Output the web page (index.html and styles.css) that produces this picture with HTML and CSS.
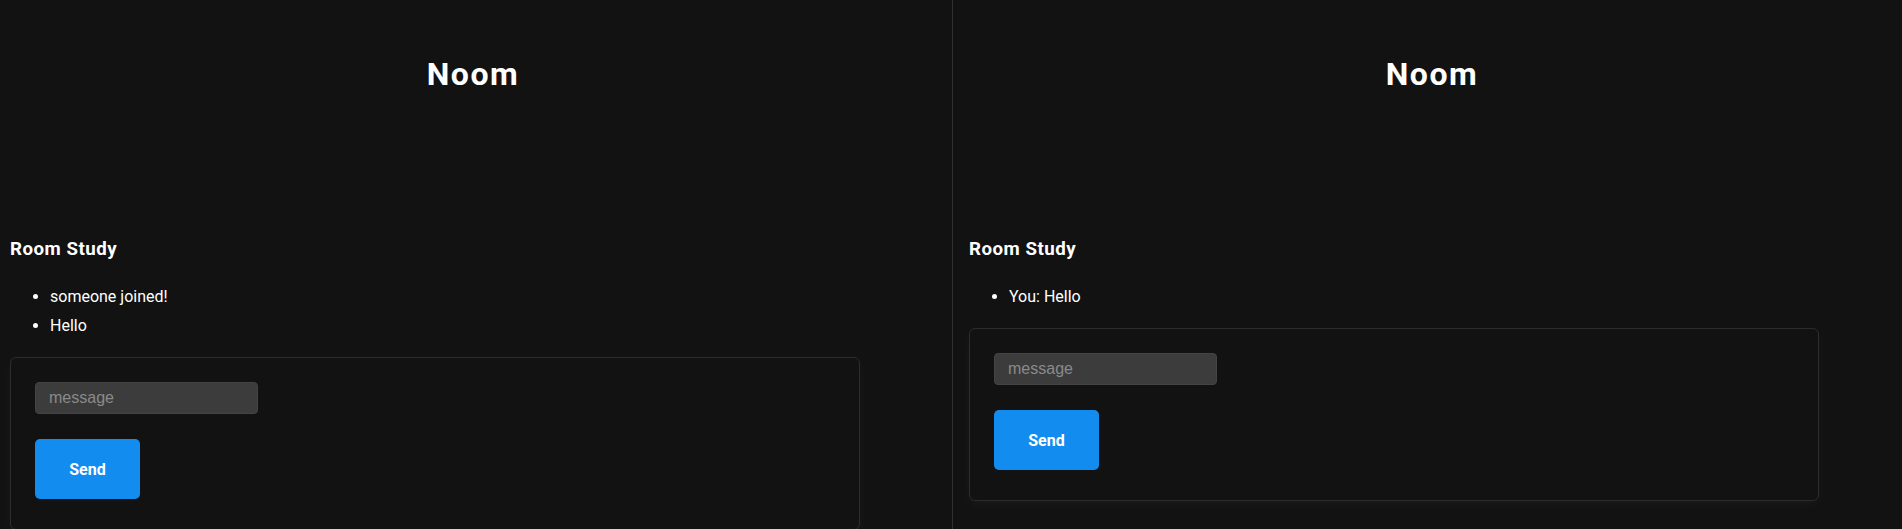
FILE: index.html
```html
<!DOCTYPE html>
<html lang="en">
<head>
<meta charset="utf-8">
<title>Noom</title>
<link rel="stylesheet" href="styles.css">
</head>
<body>
<div class="desktop">
  <section class="window">
    <div class="app">
      <header class="app-header"><h1>Noom</h1></header>
      <main class="room">
        <h3 class="room-title">Room Study</h3>
        <ul class="messages">
          <li>someone joined!</li>
          <li>Hello</li>
        </ul>
        <form class="composer">
          <input class="composer-input" type="text" placeholder="message">
          <button class="composer-send" type="button">Send</button>
        </form>
      </main>
    </div>
  </section>
  <div class="divider"></div>
  <section class="window window-right">
    <div class="app">
      <header class="app-header"><h1>Noom</h1></header>
      <main class="room">
        <h3 class="room-title">Room Study</h3>
        <ul class="messages">
          <li>You: Hello</li>
        </ul>
        <form class="composer">
          <input class="composer-input" type="text" placeholder="message">
          <button class="composer-send" type="button">Send</button>
        </form>
      </main>
    </div>
  </section>
</div>
</body>
</html>
```
FILE: styles.css
```css
html, body {
  margin: 0;
  padding: 0;
  background: #121212;
  overflow: hidden;
}

body {
  font-family: Roboto, "Noto Sans", sans-serif;
  color: #ffffff;
}

.desktop {
  display: flex;
  height: 529px;
  overflow: hidden;
}

.window {
  flex: none;
  width: 952px;
  overflow: hidden;
}

.window-right {
  flex: 1 1 auto;
  width: auto;
  min-width: 0;
  padding-left: 6px;
}

.divider {
  flex: none;
  width: 1px;
  background: #2f2f2f;
}

.app {
  box-sizing: border-box;
  width: 946px;
  padding: 54px 10px 0;
}

.app-header h1 {
  margin: 0;
  font-size: 32px;
  line-height: 40px;
  font-weight: 700;
  letter-spacing: 1.5px;
  text-align: center;
}

.room {
  margin-top: 143px;
}

.room-title {
  margin: 0;
  font-size: 18.72px;
  line-height: 24px;
  font-weight: 700;
  letter-spacing: 0.5px;
}

.messages {
  margin: 21px 0 17px;
  padding-left: 40px;
  font-size: 16px;
  line-height: 29px;
}

.composer {
  box-sizing: border-box;
  width: 850px;
  display: flex;
  flex-direction: column;
  align-items: flex-start;
  gap: 25px;
  padding: 24px 24px 30px;
  border: 1px solid #2c2c2c;
  border-radius: 6px;
  box-shadow: 0 4px 12px rgba(255, 255, 255, 0.035);
}

.composer-input {
  box-sizing: border-box;
  width: 223px;
  height: 32px;
  padding: 0 13px;
  background: #3c3c3c;
  border: 1px solid #444444;
  border-radius: 4px;
  color: #ffffff;
  font-family: "Liberation Sans", Arial, sans-serif;
  font-size: 16px;
  outline: none;
}

.composer-input::placeholder {
  color: #8a8a8a;
}

.composer-send {
  box-sizing: border-box;
  width: 105px;
  height: 60px;
  padding: 0;
  background: #128cef;
  border: none;
  border-radius: 5px;
  color: #ffffff;
  font-family: Roboto, "Noto Sans", sans-serif;
  font-size: 16px;
  font-weight: 700;
}
```
